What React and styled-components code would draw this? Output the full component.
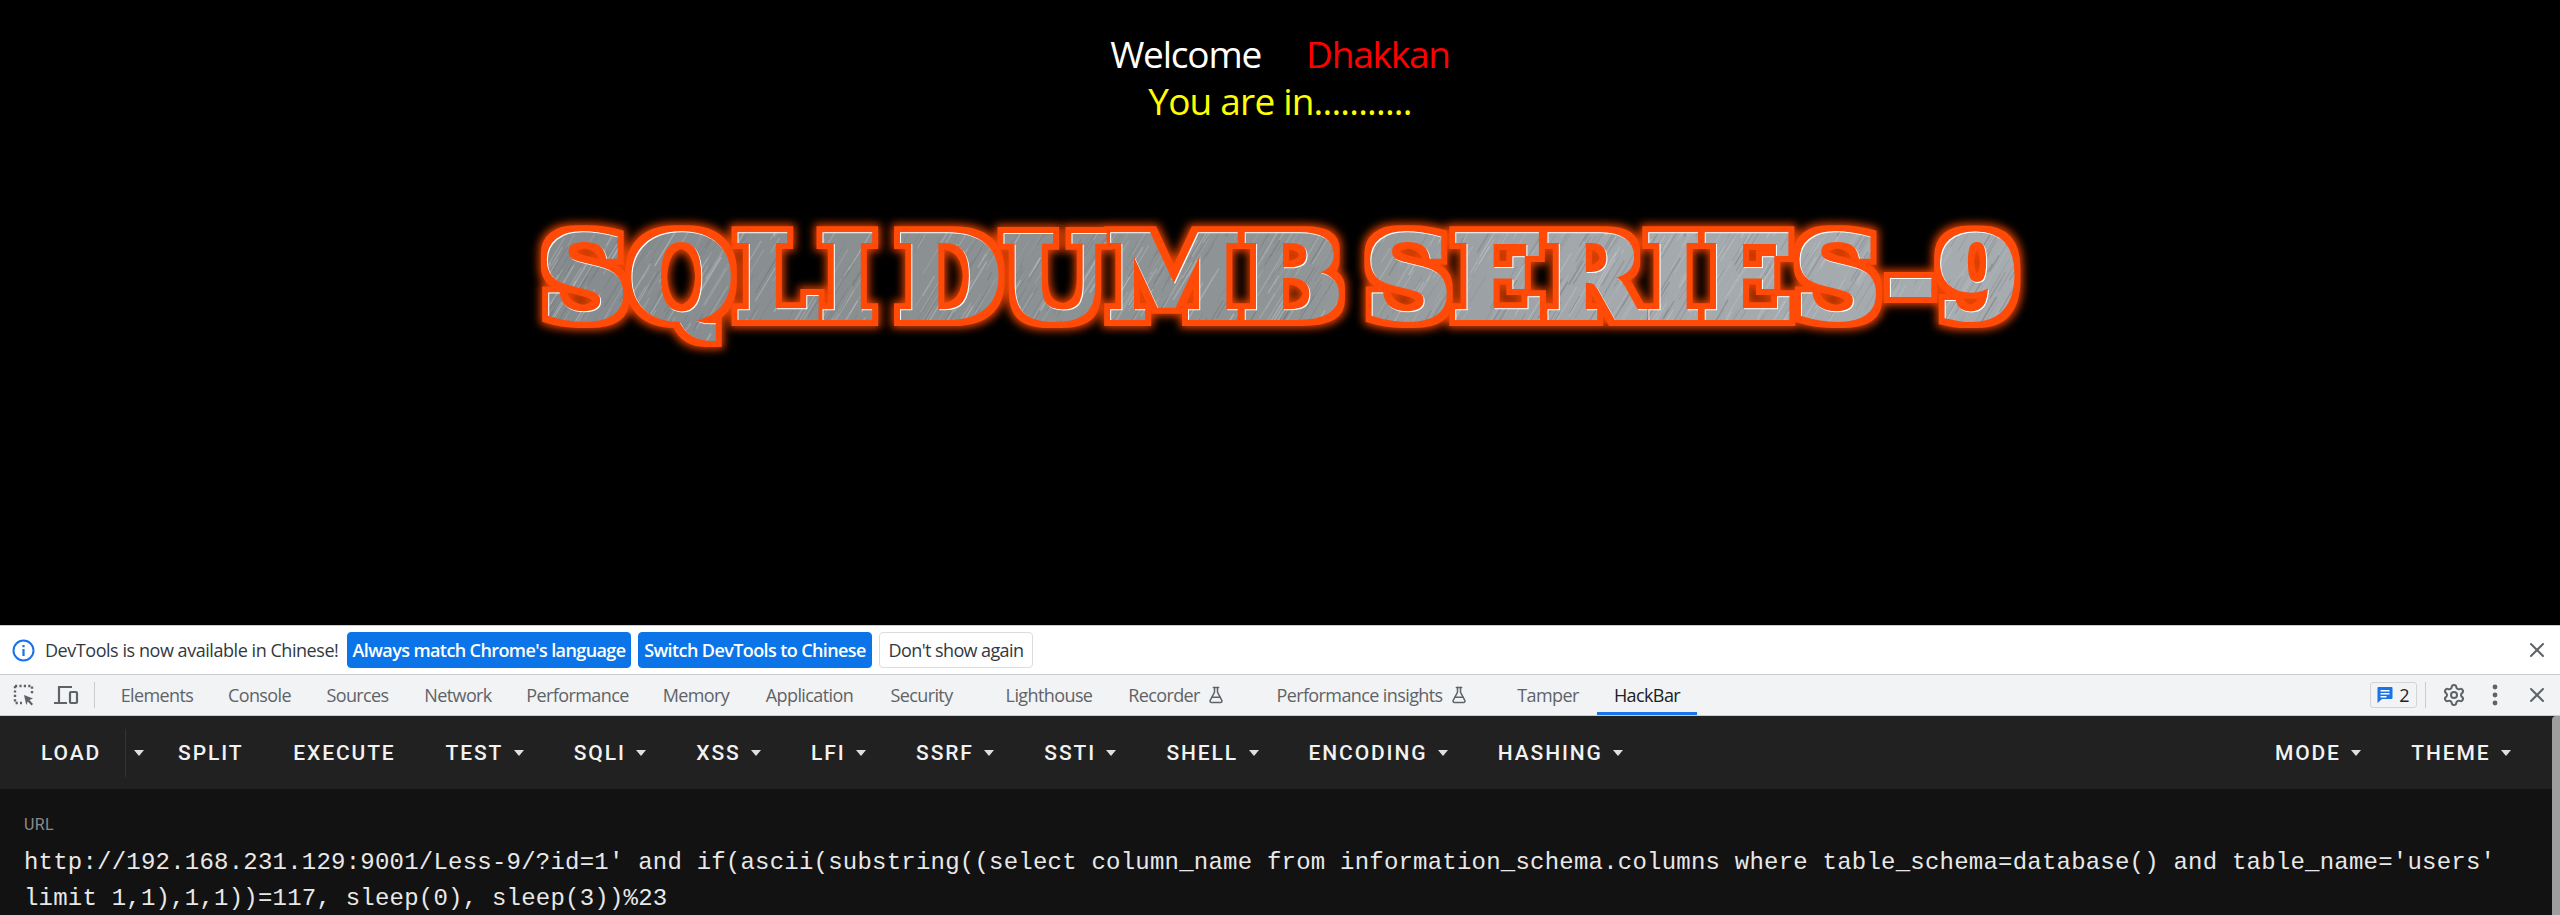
import React from "react";
import styled, { createGlobalStyle } from "styled-components";
import { FlaskConical, Settings, X } from "lucide-react";

const Global = createGlobalStyle`
  html, body { margin: 0; padding: 0; background: #000; overflow: hidden; }
  #root { width: 2560px; height: 915px; }
`;

const Page = styled.div`
  width: 2560px; height: 915px; display: flex; flex-direction: column; overflow: hidden;
`;
const Stage = styled.main`
  height: 625px; flex: none; background: #000; display: flex; flex-direction: column; align-items: center;
  padding-top: 30px; box-sizing: border-box;
`;
const Greeting = styled.div`
  display: flex; flex-direction: column; align-items: center;
  font: 400 37px/47px "Open Sans", "Noto Sans", sans-serif;
`;
const GreetLine = styled.div`
  display: flex; gap: ${p => p.$gap || 0}px; letter-spacing: ${p => p.$ls}px;
`;
const Word = styled.span`
  color: ${p => p.$c};
`;
const Title = styled.svg`
  display: block; width: 1600px; height: 180px; margin-top: 66px; flex: none;
`;
const TitleText = styled.text`
  font-family: "DejaVu Serif", serif; font-weight: 700; font-size: 114px; word-spacing: -20px;
`;

const Info = styled.div`
  height: 50px; box-sizing: border-box; background: #fff; border-top: 1px solid #cbcdd1; border-bottom: 1px solid #cbcdd1;
  display: flex; align-items: center; padding-left: 12px; flex: none;
  font: 400 18px "Open Sans", sans-serif; color: #303942;
`;
const InfoText = styled.span`
  margin: 0 9px 0 10px; letter-spacing: -0.45px; white-space: nowrap; width: 293px;
`;
const InfoBtn = styled.button`
  height: 36px; box-sizing: border-box; padding: 0; width: ${p => p.$w}px; margin-right: 7px; border-radius: 4px;
  font: 600 18px "Open Sans", sans-serif; letter-spacing: -0.6px; white-space: nowrap;
  background: ${p => p.$primary ? "#0b74e8" : "#fff"}; color: ${p => p.$primary ? "#fff" : "#303942"};
  border: 1px solid ${p => p.$primary ? "#0b74e8" : "#dadce0"};
  ${p => !p.$primary && "font-weight: 400;"}
`;
const Spacer = styled.div`flex: 1;`;
const CloseWrap = styled.span`
  display: flex; width: 24px; height: 24px; align-items: center; justify-content: center; margin-right: 11px; color: #5f6368;
`;

const TabsBar = styled.div`
  height: 41px; box-sizing: border-box; background: #f1f3f4; border-bottom: 1px solid #cbcdd1;
  display: flex; align-items: stretch; flex: none; padding-left: 12px;
  font: 400 18px "Open Sans", sans-serif;
`;
const ToolIcons = styled.div`
  display: flex; align-items: center; gap: 17px; width: 82px; box-sizing: border-box;
`;
const VSep = styled.i`
  width: 1px; height: 26px; background: #c9cbce; align-self: center; display: block; flex: none;
`;
const Tab = styled.div`
  width: ${p => p.$w}px; margin-left: ${p => p.$ml || 0}px; flex: none; display: flex; align-items: center; justify-content: center; gap: 7px;
  color: ${p => p.$active ? "#202124" : "#5f6368"}; letter-spacing: -0.6px; white-space: nowrap; box-sizing: border-box;
  border-bottom: 3px solid ${p => p.$active ? "#1a73e8" : "transparent"};
  padding-top: 3px;
`;
const Issue = styled.div`
  width: 47px; height: 26px; box-sizing: border-box; align-self: center; border: 1px solid #d2d4d8; border-radius: 3px;
  display: flex; align-items: center; justify-content: center; gap: 6px; margin-right: 8px; color: #202124; font-size: 18px;
`;
const RightIcon = styled.span`
  display: flex; align-items: center; justify-content: center; color: #5f6368; width: ${p => p.$w}px;
  margin-left: ${p => p.$ml || 0}px; margin-right: ${p => p.$mr || 0}px;
`;

const Panel = styled.div`
  flex: 1; display: flex; min-height: 0; background: #121212;
`;
const PanelBody = styled.div`
  flex: 1; min-width: 0; display: flex; flex-direction: column;
`;
const Scroll = styled.div`
  width: 8px; flex: none; background: #9e9e9e; border-radius: 4px 0 0 0;
`;
const Bar = styled.nav`
  height: 73px; flex: none; background: #212121; display: flex; align-items: center; padding: 0 16px;
  font: 500 21px "Roboto", sans-serif; letter-spacing: 1.875px; color: #f2f2f2;
`;
const Btn = styled.div`
  height: 48px; padding: 0 ${p => p.$pr ?? 25}px 0 ${p => p.$pl ?? 25}px; display: flex; align-items: center; gap: 10.5px; white-space: nowrap;
`;
const Caret = styled.b`
  display: block; width: 0; height: 0; border-left: 5.5px solid transparent; border-right: 5.5px solid transparent; border-top: 6px solid #e0e0e0;
`;
const BtnSep = styled.i`
  display: block; width: 1px; height: 48px; background: #333;
`;
const Fields = styled.div`
  padding: 26px 24px 0;
`;
const Label = styled.div`
  font: 400 16px/20px "Roboto", sans-serif; color: #8a8a8a; letter-spacing: 0.4px;
`;
const UrlText = styled.div`
  margin-top: 10px; font: 400 24px/36px "Liberation Mono", monospace; letter-spacing: 0.22px; color: #e8e8e8;
`;

function rng(seed) { let s = seed; return () => (s = (s * 16807) % 2147483647) / 2147483647; }
const r = rng(4242);
const strokes = Array.from({ length: 1700 }, () => {
  const x = r() * 1560, y = r() * 170, l = 8 + r() * 38, w = 0.5 + r() * 1, light = r() > 0.5;
  return { x, y, dx: l * 0.6, dy: -l, w, c: light ? "#c4cacd" : "#6f7476", o: 0.2 + r() * 0.35 };
});

const Inspect = () => (
  <svg width="24" height="24" viewBox="0 0 24 24" fill="none" stroke="#5f6368">
    <path d="M3 3h17v8M3 3v17h7" strokeWidth="2.4" strokeDasharray="2.2 2.2" />
    <path d="M12 12l9 3.5-3.6 1.6 3.6 4-1.5 1.4-3.7-4-1.5 3.4z" fill="#5f6368" stroke="none" />
  </svg>
);
const Device = () => (
  <svg width="26" height="24" viewBox="0 0 26 24" fill="none" stroke="#5f6368" strokeWidth="2.2">
    <path d="M6 19V4h13M1 20h13" />
    <rect x="17" y="9" width="7" height="11" rx="1" />
  </svg>
);
const InfoIcon = () => (
  <svg width="23" height="23" viewBox="0 0 23 23" fill="none">
    <circle cx="11.5" cy="11.5" r="10" stroke="#1a73e8" strokeWidth="2" />
    <rect x="10.4" y="10" width="2.2" height="7" fill="#1a73e8" />
    <rect x="10.4" y="6" width="2.2" height="2.2" fill="#1a73e8" />
  </svg>
);
const Msg = () => (
  <svg width="16" height="18" viewBox="0 0 16 18">
    <path d="M1.5 1h13a1 1 0 0 1 1 1v10a1 1 0 0 1-1 1H5l-4.5 4V2a1 1 0 0 1 1-1z" fill="#1a73e8" />
    <path d="M3.5 4h9v1.5h-9zM3.5 7h9v1.5h-9zM3.5 10h6v1.5h-6z" fill="#fff" />
  </svg>
);
const Dots = () => (
  <svg width="8" height="24" viewBox="0 0 8 24" fill="#5f6368">
    <circle cx="4" cy="4" r="2.4" /><circle cx="4" cy="12" r="2.4" /><circle cx="4" cy="20" r="2.4" />
  </svg>
);

const leftBtns = [["SPLIT"], ["EXECUTE"], ["TEST", 1], ["SQLI", 1], ["XSS", 1], ["LFI", 1], ["SSRF", 1], ["SSTI", 1], ["SHELL", 1], ["ENCODING", 1], ["HASHING", 1]];
const tabs = [["Elements", 106, 9], ["Console", 99], ["Sources", 97], ["Network", 104], ["Performance", 135], ["Memory", 102], ["Application", 125], ["Security", 99]];

export default function App() {
  return (
    <Page>
      <Global />
      <Stage>
        <Greeting>
          <GreetLine $gap={45} $ls={-1.2}>
            <Word $c="#fff">Welcome</Word>
            <Word $c="#f00">Dhakkan</Word>
          </GreetLine>
          <GreetLine $ls={-0.8}><Word $c="#ff0">You are in...........</Word></GreetLine>
        </Greeting>
        <Title viewBox="0 0 1600 180">
          <defs>
            <linearGradient id="metal" x1="0" x2="1" y1="0" y2="0">
              <stop offset="0" stopColor="#858b8e" />
              <stop offset="0.5" stopColor="#8f9496" />
              <stop offset="0.7" stopColor="#a3a9ad" />
              <stop offset="1" stopColor="#a6acb0" />
            </linearGradient>
            <pattern id="brushed" patternUnits="userSpaceOnUse" width="1600" height="180">
              <rect width="1600" height="180" fill="url(#metal)" />
              {strokes.map((s, i) => (
                <line key={i} x1={s.x} y1={s.y} x2={s.x + s.dx} y2={s.y + s.dy} stroke={s.c} strokeWidth={s.w} strokeOpacity={s.o} />
              ))}
            </pattern>
            <filter id="glow" x="-5%" y="-30%" width="110%" height="160%" colorInterpolationFilters="sRGB">
              <feMorphology in="SourceAlpha" operator="dilate" radius="6" result="fat" />
              <feFlood floodColor="#ff4a08" result="orange" />
              <feComposite in="orange" in2="fat" operator="in" result="halo" />
              <feMorphology in="SourceAlpha" operator="dilate" radius="8" result="fatter" />
              <feGaussianBlur in="fatter" stdDeviation="4" result="soft" />
              <feFlood floodColor="#e84300" result="dim" />
              <feComposite in="dim" in2="soft" operator="in" result="outer" />
              <feOffset in="SourceAlpha" dx="1.2" dy="1.2" result="shift" />
              <feComposite in="SourceAlpha" in2="shift" operator="out" result="rim" />
              <feFlood floodColor="#fff" result="white" />
              <feComposite in="white" in2="rim" operator="in" result="hi" />
              <feMerge>
                <feMergeNode in="outer" />
                <feMergeNode in="halo" />
                <feMergeNode in="SourceGraphic" />
                <feMergeNode in="hi" />
              </feMerge>
            </filter>
          </defs>
          <TitleText x="61" y="128" fill="url(#brushed)" stroke="url(#brushed)" strokeWidth="4" filter="url(#glow)" textLength="1479" lengthAdjust="spacingAndGlyphs">SQLI DUMB SERIES-9</TitleText>
        </Title>
      </Stage>
      <Info>
        <InfoIcon />
        <InfoText>DevTools is now available in Chinese!</InfoText>
        <InfoBtn $primary $w={284}>Always match Chrome's language</InfoBtn>
        <InfoBtn $primary $w={234}>Switch DevTools to Chinese</InfoBtn>
        <InfoBtn $w={154}>Don't show again</InfoBtn>
        <Spacer />
        <CloseWrap><X size={24} strokeWidth={2} /></CloseWrap>
      </Info>
      <TabsBar>
        <ToolIcons><Inspect /><Device /></ToolIcons>
        <VSep />
        {tabs.map(([t, w, ml]) => <Tab key={t} $w={w} $ml={ml}>{t}</Tab>)}
        <Tab $ml={17} $w={122}>Lighthouse</Tab>
        <Tab $w={133}>Recorder <FlaskConical size={18} /></Tab>
        <Tab $ml={16} $w={226}>Performance insights <FlaskConical size={18} /></Tab>
        <Tab $ml={17} $w={92}>Tamper</Tab>
        <Tab $ml={3} $w={100} $active>HackBar</Tab>
        <Spacer />
        <Issue><Msg />2</Issue>
        <VSep />
        <RightIcon $w={24} $ml={16}><Settings size={24} strokeWidth={2} /></RightIcon>
        <RightIcon $w={8} $ml={25}><Dots /></RightIcon>
        <RightIcon $w={24} $ml={26} $mr={11}><X size={24} /></RightIcon>
      </TabsBar>
      <Panel>
        <PanelBody>
          <Bar>
            <Btn $pr={24}>LOAD</Btn>
            <BtnSep />
            <Btn $pl={8} $pr={9}><Caret /></Btn>
            {leftBtns.map(([t, c]) => <Btn key={t}>{t}{c && <Caret />}</Btn>)}
            <Spacer />
            <Btn>MODE<Caret /></Btn>
            <Btn>THEME<Caret /></Btn>
          </Bar>
          <Fields>
            <Label>URL</Label>
            <UrlText>http://192.168.231.129:9001/Less-9/?id=1' and if(ascii(substring((select column_name from information_schema.columns where table_schema=database() and table_name='users' limit 1,1),1,1))=117, sleep(0), sleep(3))%23</UrlText>
          </Fields>
        </PanelBody>
        <Scroll />
      </Panel>
    </Page>
  );
}
